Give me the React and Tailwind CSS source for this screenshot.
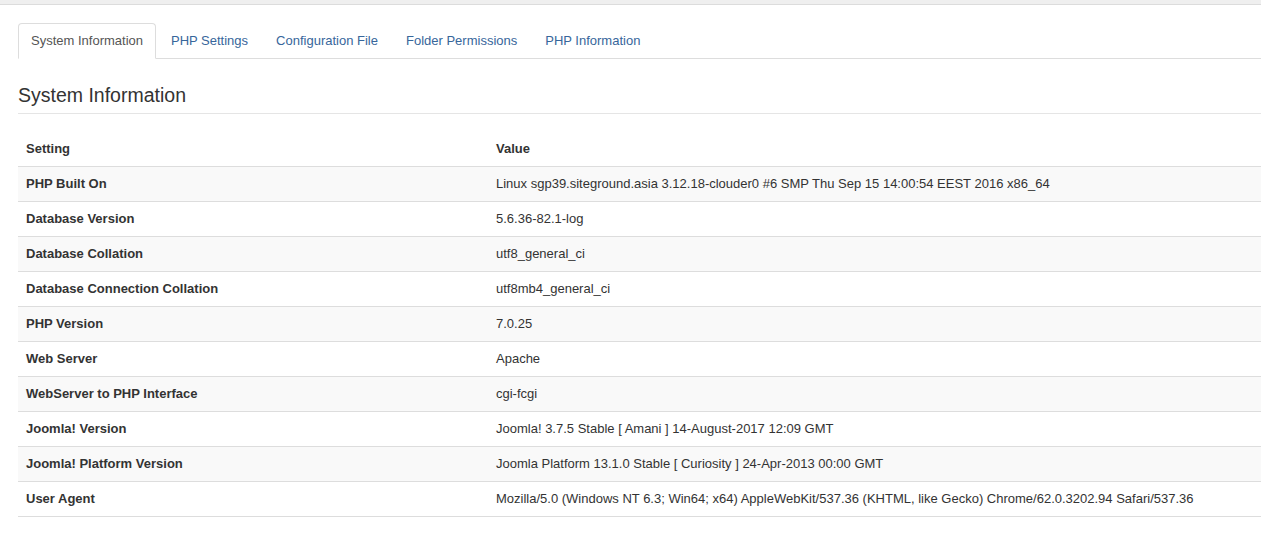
import React from "react";

const rows = [
  ["PHP Built On", "Linux sgp39.siteground.asia 3.12.18-clouder0 #6 SMP Thu Sep 15 14:00:54 EEST 2016 x86_64"],
  ["Database Version", "5.6.36-82.1-log"],
  ["Database Collation", "utf8_general_ci"],
  ["Database Connection Collation", "utf8mb4_general_ci"],
  ["PHP Version", "7.0.25"],
  ["Web Server", "Apache"],
  ["WebServer to PHP Interface", "cgi-fcgi"],
  ["Joomla! Version", "Joomla! 3.7.5 Stable [ Amani ] 14-August-2017 12:09 GMT"],
  ["Joomla! Platform Version", "Joomla Platform 13.1.0 Stable [ Curiosity ] 24-Apr-2013 00:00 GMT"],
  ["User Agent", "Mozilla/5.0 (Windows NT 6.3; Win64; x64) AppleWebKit/537.36 (KHTML, like Gecko) Chrome/62.0.3202.94 Safari/537.36"],
];

const tabs = ["System Information", "PHP Settings", "Configuration File", "Folder Permissions", "PHP Information"];

export default function App() {
  return (
    <div className="min-h-[555px] w-full bg-white text-[13px] text-[#333] font-['Liberation_Sans',Arial,sans-serif] overflow-hidden">
      <div className="h-[5px] bg-[#efefef] border-b border-[#dcdcdc]" />
      <div className="pl-[18px] pt-[18px]">
        <ul className="flex border-b border-[#ddd] h-[36px]">
          {tabs.map((t, i) => (
            <li key={t} className="mr-[2px] -mb-px">
              {i === 0 ? (
                <span className="block h-[36px] px-[12px] leading-[34px] border border-[#ddd] border-b-white bg-white rounded-t-[4px] text-[#555]">
                  {t}
                </span>
              ) : (
                <span className="block h-[36px] px-[12px] leading-[34px] border border-transparent text-[#37669b]">
                  {t}
                </span>
              )}
            </li>
          ))}
        </ul>
        <h2 className="mt-[24px] pb-[6px] text-[19.5px] leading-[24px] font-normal text-[#333] border-b border-[#e5e5e5]">
          System Information
        </h2>
        <table className="mt-[17px] w-full border-collapse text-left">
          <thead>
            <tr className="h-[35px]">
              <th className="w-[470px] px-[8px] font-bold align-middle">Setting</th>
              <th className="px-[8px] font-bold align-middle">Value</th>
            </tr>
          </thead>
          <tbody>
            {rows.map(([k, v], i) => (
              <tr key={k} className={`h-[35px] border-t border-[#ddd] ${i % 2 === 0 ? "bg-[#f9f9f9]" : "bg-white"}`}>
                <td className="px-[8px] font-bold align-middle">{k}</td>
                <td className="px-[8px] align-middle whitespace-nowrap">{v}</td>
              </tr>
            ))}
            <tr className="border-t border-[#ddd]"><td colSpan={2} /></tr>
          </tbody>
        </table>
      </div>
    </div>
  );
}
